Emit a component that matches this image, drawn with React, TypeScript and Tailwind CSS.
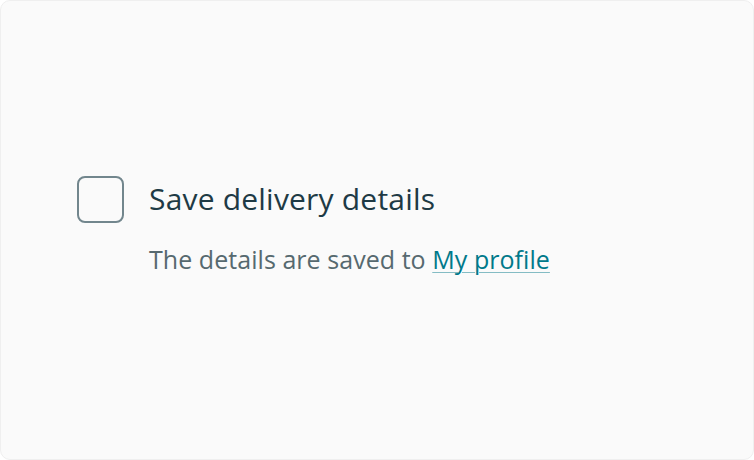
import React from "react";

export default function App() {
  return (
    <div className="w-[754px] h-[460px] bg-white">
      <div
        className="w-full h-full rounded-[10px] border border-[#efefef] bg-[#fafafa] flex items-start pl-[76px] pt-[175px]"
        style={{ fontFamily: '"Open Sans", "Noto Sans", sans-serif' }}
      >
        <div className="flex items-start gap-[25px]">
          <div className="w-[47px] h-[47px] rounded-[8px] border-2 border-[#72868d] bg-[#fafafa] shrink-0" />
          <div className="flex flex-col pt-[5px]">
            <div className="text-[30px] leading-[36px] text-[#1e3a45] tracking-[0.2px]">
              Save delivery details
            </div>
            <div className="mt-[26px] text-[25px] leading-[32px] text-[#56696f] tracking-[0.05px]">
              The details are saved to{" "}
              <a
                href="#"
                className="text-[#00798a] underline decoration-[#84bcc4] decoration-1 underline-offset-[3px]"
              >
                My profile
              </a>
            </div>
          </div>
        </div>
      </div>
    </div>
  );
}
